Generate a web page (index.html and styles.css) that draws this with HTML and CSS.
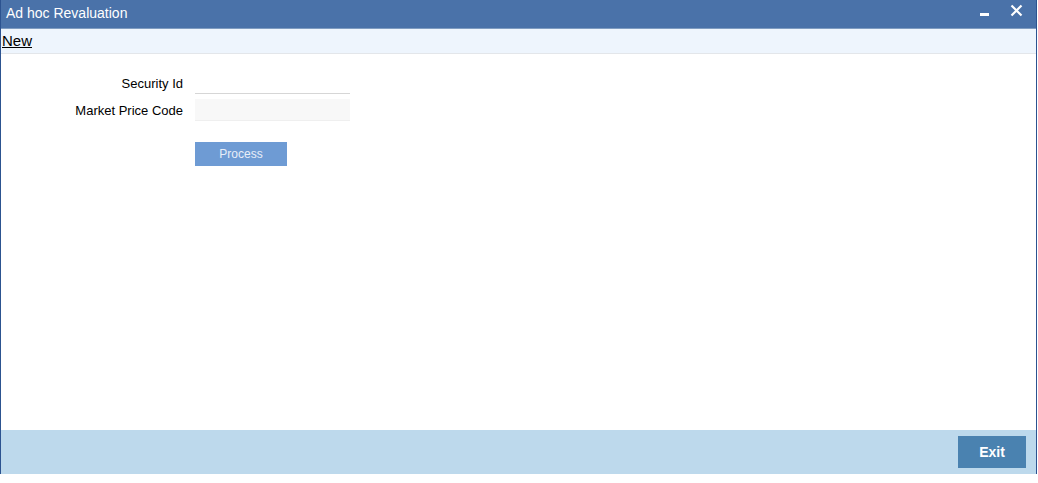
FILE: index.html
```
<!DOCTYPE html>
<html lang="en">
  <head>
    <meta charset="UTF-8" />
    <title>Ad hoc Revaluation</title>
    <link rel="stylesheet" href="styles.css">
  </head>
  <body>
    <div class="window">
      <header class="titlebar">
        <span class="title">Ad hoc Revaluation</span>
        <div class="controls">
          <svg class="min" width="10" height="10" viewBox="0 0 10 10">
            <rect x="0" y="6" width="9" height="3" fill="#fff" />
          </svg>
          <svg class="close" width="13" height="13" viewBox="0 0 13 13">
            <path d="M1.5 1.5 L11.5 11.5 M11.5 1.5 L1.5 11.5" stroke="#fff" stroke-width="2.2" />
          </svg>
        </div>
      </header>
      <nav class="toolbar">
        <a href="#" class="new">New</a>
      </nav>
      <main class="form">
        <div class="row">
          <label class="label">Security Id</label>
          <input type="text" class="field" />
        </div>
        <div class="row">
          <label class="label">Market Price Code</label>
          <input type="text" class="field field-grey" />
        </div>
        <div class="row action">
          <button class="process">Process</button>
        </div>
      </main>
      <footer class="footer">
        <button class="exit">Exit</button>
      </footer>
    </div>
  </body>
</html>
```

FILE: styles.css
```
* {
  box-sizing: border-box;
}

body {
  margin: 0;
  font-family: "Liberation Sans", Arial, sans-serif;
  background: #fff;
}

.window {
  width: 1037px;
  height: 474px;
  display: flex;
  flex-direction: column;
  border-left: 1px solid #2c5390;
  border-right: 1px solid #2c5390;
}

.titlebar {
  height: 29px;
  background: #4a72a9;
  border-bottom: 1px solid #7f9cc1;
  display: flex;
  align-items: center;
  justify-content: space-between;
  padding: 0 13px 0 5px;
}

.title {
  color: #fff;
  font-size: 14px;
  margin-top: -2px;
}

.controls {
  display: flex;
  align-items: center;
  gap: 20px;
  margin-top: -8px;
}

.min {
  margin-top: 4px;
}

.toolbar {
  height: 25px;
  background: #eef5fd;
  border-bottom: 1px solid #e3e6ea;
  display: flex;
  align-items: center;
}

.new {
  color: #000;
  font-size: 15px;
  margin-left: 1px;
  margin-top: -1px;
}

.form {
  flex: 1;
  padding-top: 18px;
}

.row {
  display: flex;
  align-items: center;
  height: 22px;
  margin-bottom: 5px;
}

.label {
  width: 182px;
  text-align: right;
  font-size: 13px;
  color: #000;
  margin-right: 12px;
}

.field {
  width: 155px;
  height: 22px;
  border: none;
  border-bottom: 1px solid #d6d6d6;
  background: #fff;
}

.field-grey {
  background: #f8f8f8;
  border-bottom: 1px solid #efefef;
}

.action {
  margin-top: 21px;
  height: 24px;
  padding-left: 194px;
}

.process {
  width: 92px;
  height: 24px;
  border: none;
  background: #6e9bd4;
  color: #e8eef8;
  font-family: "Liberation Sans", Arial, sans-serif;
  font-size: 12px;
}

.footer {
  height: 44px;
  background: #bdd9ec;
  display: flex;
  align-items: center;
  justify-content: flex-end;
  padding-right: 10px;
}

.exit {
  width: 68px;
  height: 32px;
  border: none;
  background: #4a82b0;
  color: #fff;
  font-family: "Liberation Sans", Arial, sans-serif;
  font-size: 14px;
  font-weight: bold;
}
```
